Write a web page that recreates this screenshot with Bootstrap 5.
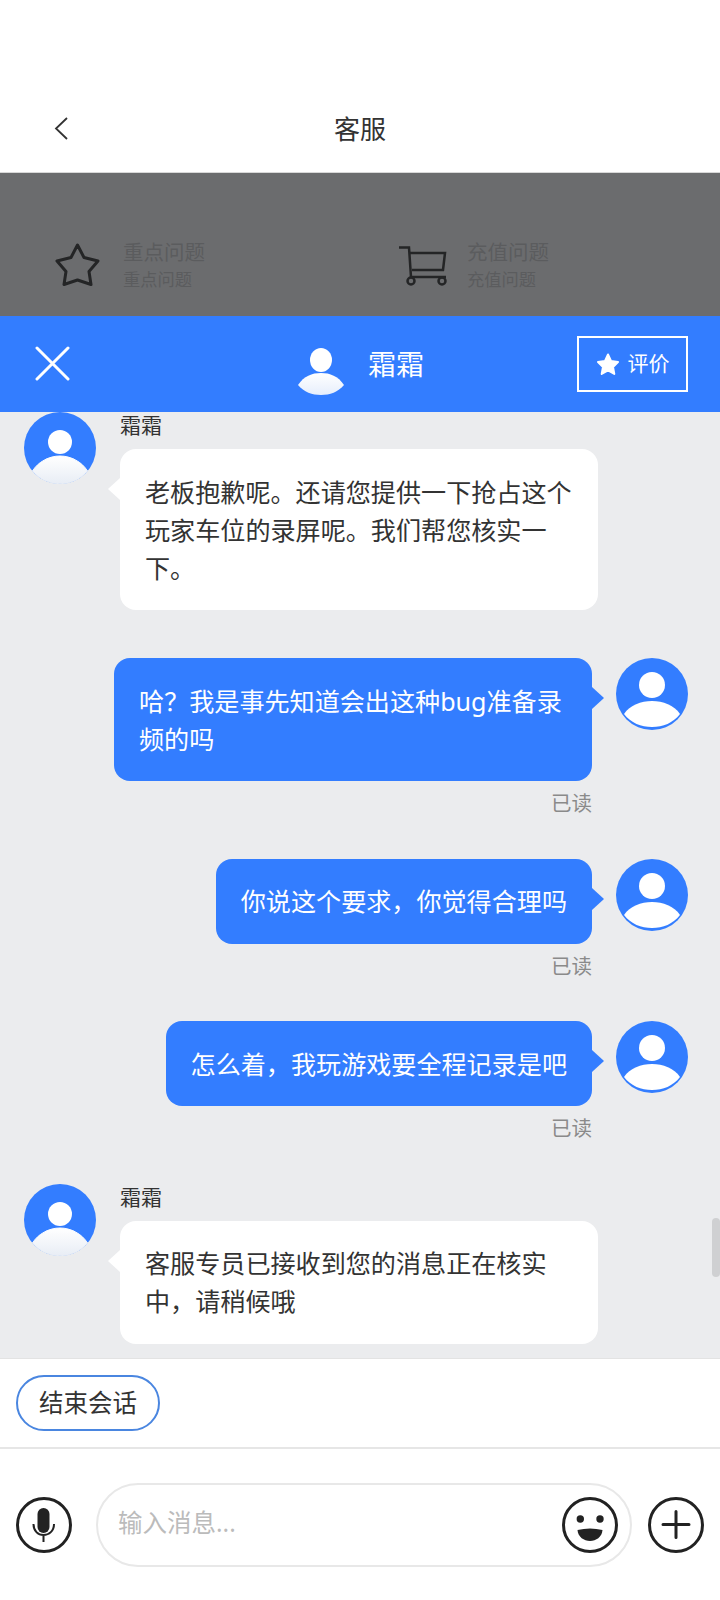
<!DOCTYPE html>
<html lang="zh">

<head>
    <meta charset="UTF-8" />
    <title>客服</title>
    <link rel="stylesheet" href="https://cdn.jsdelivr.net/npm/bootstrap@5.3.3/dist/css/bootstrap.min.css">
    <script src="https://cdn.jsdelivr.net/npm/bootstrap@5.3.3/dist/js/bootstrap.bundle.min.js"></script>
    <style>
        body {
            height: 1600px;
            overflow: hidden;
            background-color: #fff;
            font-family: "Noto Sans", "Noto Sans CJK SC", sans-serif;
            color: #333;
        }

        .top-bar {
            height: 173px;
            padding-top: 101px;
            border-bottom: 1px solid #d8d8d8;
        }

        .top-title {
            font-size: 26px;
            line-height: 56px;
            color: #333;
        }

        .back-btn {
            left: 54px;
            top: 117px;
        }

        .topic-strip {
            height: 143px;
            padding-top: 65px;
            background-color: #6b6c6e;
            color: #5b5c5e;
        }

        .topic-item {
            width: 344px;
        }

        .topic-icon {
            width: 68px;
            padding-left: 55px;
            box-sizing: content-box;
        }

        .topic-icon-star {
            margin-top: 5px;
        }

        .topic-icon-cart {
            margin-top: 8px;
        }

        .topic-name {
            font-size: 20.5px;
            line-height: 28px;
        }

        .topic-sub {
            font-size: 17.3px;
            line-height: 27px;
        }

        .agent-bar {
            height: 96px;
            background-color: #337dff;
            color: #fff;
        }

        .close-btn {
            left: 35px;
            top: 30px;
        }

        .agent-icon {
            margin-top: 15px;
            margin-left: 2px;
        }

        .agent-name {
            font-size: 28px;
            margin-left: 24px;
            margin-top: -1px;
        }

        .rate-btn {
            right: 32px;
            top: 20px;
            width: 111px;
            height: 56px;
            border: 2px solid #fff;
            font-size: 21px;
            gap: 8px;
        }

        .chat-area {
            height: 946px;
            background-color: #ebecee;
            overflow: hidden;
        }

        .scroll-thumb {
            right: 0;
            top: 806px;
            width: 8px;
            height: 59px;
            border-radius: 4px;
            background-color: #cfd0d2;
        }

        .msg-left {
            padding-left: 24px;
            margin-bottom: 48px;
        }

        .msg-right {
            padding-right: 32px;
            margin-bottom: 39.5px;
        }

        .msg-avatar {
            flex: 0 0 72px;
            width: 72px;
            height: 72px;
        }

        .msg-name {
            height: 37px;
            font-size: 21px;
            line-height: 26px;
            color: #333;
        }

        .bubble {
            position: relative;
            max-width: 478px;
            padding: 23.5px 25px;
            border-radius: 16px;
            font-size: 25.1px;
            line-height: 38px;
        }

        .bubble::before {
            content: "";
            position: absolute;
            top: 29px;
            border-top: 11px solid transparent;
            border-bottom: 11px solid transparent;
        }

        .bubble-in {
            width: 478px;
            background-color: #fff;
            color: #333;
        }

        .bubble-in::before {
            left: -12px;
            border-right: 12px solid #fff;
        }

        .bubble-out {
            background-color: #337dff;
            color: #fff;
        }

        .bubble-out::before {
            right: -12px;
            border-left: 12px solid #337dff;
        }

        .read-mark {
            height: 30px;
            margin-top: 7px;
            margin-bottom: 1px;
            font-size: 20.5px;
            line-height: 30px;
            color: #8a8a8a;
        }

        .quick-bar {
            height: 91px;
            padding: 16px 16px 0;
            border-top: 1px solid #e3e3e3;
            border-bottom: 2px solid #e6e6e6;
        }

        .end-btn {
            width: 144px;
            height: 56px;
            border: 2px solid #4a86e0;
            border-radius: 28px;
            font-size: 24.5px;
            line-height: 52px;
            color: #333;
        }

        .input-row {
            padding: 34px 16px 0;
        }

        .input-pill {
            width: 536px;
            height: 84px;
            margin-left: 24px;
            margin-right: 16px;
            padding: 0 12px 0 20px;
            border: 2px solid #e8e8e8;
            border-radius: 42px;
            font-size: 24.5px;
            color: #bbb;
        }

        .input-hint {
            margin-top: -4px;
        }
    </style>
</head>

<body>

    <svg width="0" height="0" class="position-absolute">
        <defs>
            <linearGradient id="fadeBody" x1="0" y1="0" x2="0" y2="1">
                <stop offset="0" stop-color="#fff" />
                <stop offset="1" stop-color="#e6eefc" />
            </linearGradient>
            <linearGradient id="fadeChat" x1="0" y1="0" x2="0" y2="1">
                <stop offset="0" stop-color="#fff" />
                <stop offset="1" stop-color="#e8edf5" />
            </linearGradient>
        </defs>
    </svg>

    <!-- Header -->
    <div class="top-bar position-relative text-center">
        <svg class="back-btn position-absolute" width="14" height="23" viewBox="0 0 14 23" fill="none" stroke="#333" stroke-width="1.800">
            <path d="M13 1 2 11.500 13 22" />
        </svg>
        <div class="top-title">客服</div>
    </div>

    <!-- Topics behind the overlay -->
    <div class="topic-strip d-flex">
        <div class="topic-item d-flex">
            <div class="topic-icon topic-icon-star">
                <svg width="46" height="44" viewBox="0 0 46 44" fill="none" stroke="#242526" stroke-width="3" stroke-linejoin="round">
                    <path d="M22.500 2 29 14.500 43 18 34 28.500 36 41.500 22.500 37 9 41.500 11 28.500 2 18 16 14.500Z" />
                </svg>
            </div>
            <div>
                <div class="topic-name">重点问题</div>
                <div class="topic-sub">重点问题</div>
            </div>
        </div>
        <div class="topic-item d-flex">
            <div class="topic-icon topic-icon-cart">
                <svg width="50" height="40" viewBox="0 0 50 40" fill="none" stroke="#242526" stroke-width="2.500">
                    <path d="M0 1.500H10L12 31H47" />
                    <path d="M11 7H46L44 24H13" />
                    <circle cx="12" cy="35" r="3.500" />
                    <circle cx="43" cy="35" r="3.500" />
                </svg>
            </div>
            <div>
                <div class="topic-name">充值问题</div>
                <div class="topic-sub">充值问题</div>
            </div>
        </div>
    </div>

    <!-- Agent bar -->
    <div class="agent-bar position-relative d-flex align-items-center justify-content-center">
        <svg class="close-btn position-absolute" width="35" height="35" viewBox="0 0 35 35" stroke="#fff" stroke-width="3" stroke-linecap="round">
            <path d="M2 2 33 33M33 2 2 33" />
        </svg>
        <svg class="agent-icon" width="46" height="47" viewBox="0 0 46 47">
            <ellipse cx="23" cy="12" rx="11" ry="12" fill="#fff" />
            <path d="M0 37C6 28 14 25 23 25S40 28 46 37C40 44 32 47 23 47S6 44 0 37Z" fill="url(#fadeBody)" />
        </svg>
        <span class="agent-name">霜霜</span>
        <div class="rate-btn position-absolute d-flex align-items-center justify-content-center">
            <svg width="24" height="24" viewBox="0 0 24 24" fill="#fff" stroke="#fff" stroke-width="2" stroke-linejoin="round">
                <path d="M12 2.500 15 9 22 10 17 15 18.300 22 12 18.500 5.700 22 7 15 2 10 9 9Z" />
            </svg>
            <span>评价</span>
        </div>
    </div>

    <!-- Chat -->
    <div class="chat-area position-relative">
        <div class="scroll-thumb position-absolute"></div>

        <div class="msg-left d-flex">
            <svg class="msg-avatar" viewBox="0 0 72 72">
                <circle cx="36" cy="36" r="36" fill="#337dff" />
                <circle cx="36" cy="30" r="12" fill="#fff" />
                <path d="M8.500 59C14 50 25 44 36 44S58 50 63.500 59A36 36 0 0 1 8.500 59Z" fill="url(#fadeChat)" stroke="url(#fadeChat)" />
            </svg>
            <div class="ms-4">
                <div class="msg-name">霜霜</div>
                <div class="bubble bubble-in">老板抱歉呢。还请您提供一下抢占这个玩家车位的录屏呢。我们帮您核实一下。</div>
            </div>
        </div>

        <div class="msg-right d-flex justify-content-end">
            <div class="d-flex flex-column align-items-end me-4">
                <div class="bubble bubble-out">哈？我是事先知道会出这种bug准备录频的吗</div>
                <div class="read-mark">已读</div>
            </div>
            <svg class="msg-avatar" viewBox="0 0 72 72">
                <circle cx="36" cy="36" r="36" fill="#337dff" />
                <circle cx="36" cy="27" r="13" fill="#fff" />
                <path d="M8 56C14 47 25 43 36 43S58 47 64 56C57 65 47 69 36 69S15 65 8 56Z" fill="#fff" />
            </svg>
        </div>

        <div class="msg-right d-flex justify-content-end">
            <div class="d-flex flex-column align-items-end me-4">
                <div class="bubble bubble-out">你说这个要求，你觉得合理吗</div>
                <div class="read-mark">已读</div>
            </div>
            <svg class="msg-avatar" viewBox="0 0 72 72">
                <circle cx="36" cy="36" r="36" fill="#337dff" />
                <circle cx="36" cy="27" r="13" fill="#fff" />
                <path d="M8 56C14 47 25 43 36 43S58 47 64 56C57 65 47 69 36 69S15 65 8 56Z" fill="#fff" />
            </svg>
        </div>

        <div class="msg-right d-flex justify-content-end">
            <div class="d-flex flex-column align-items-end me-4">
                <div class="bubble bubble-out">怎么着，我玩游戏要全程记录是吧</div>
                <div class="read-mark">已读</div>
            </div>
            <svg class="msg-avatar" viewBox="0 0 72 72">
                <circle cx="36" cy="36" r="36" fill="#337dff" />
                <circle cx="36" cy="27" r="13" fill="#fff" />
                <path d="M8 56C14 47 25 43 36 43S58 47 64 56C57 65 47 69 36 69S15 65 8 56Z" fill="#fff" />
            </svg>
        </div>

        <div class="msg-left d-flex">
            <svg class="msg-avatar" viewBox="0 0 72 72">
                <circle cx="36" cy="36" r="36" fill="#337dff" />
                <circle cx="36" cy="30" r="12" fill="#fff" />
                <path d="M8.500 59C14 50 25 44 36 44S58 50 63.500 59A36 36 0 0 1 8.500 59Z" fill="url(#fadeChat)" stroke="url(#fadeChat)" />
            </svg>
            <div class="ms-4">
                <div class="msg-name">霜霜</div>
                <div class="bubble bubble-in">客服专员已接收到您的消息正在核实中，请稍候哦</div>
            </div>
        </div>
    </div>

    <!-- Quick reply -->
    <div class="quick-bar">
        <div class="end-btn text-center">结束会话</div>
    </div>

    <!-- Input -->
    <div class="input-row d-flex align-items-center">
        <svg width="56" height="56" viewBox="0 0 56 56" fill="none" stroke="#222" stroke-width="3">
            <circle cx="28" cy="28" r="26.500" />
            <rect x="21.500" y="11" width="12" height="25" rx="6" fill="#222" stroke="none" />
            <path d="M17.500 27C17.500 34 22 38 27.500 38S38 34 38 27M27.500 38V45" stroke-width="2" />
        </svg>
        <div class="input-pill d-flex align-items-center justify-content-between">
            <span class="input-hint">输入消息...</span>
            <svg width="56" height="56" viewBox="0 0 56 56" fill="none" stroke="#222" stroke-width="3">
                <circle cx="28" cy="28" r="26.500" />
                <circle cx="18.300" cy="22" r="3.700" fill="#222" stroke="none" />
                <circle cx="38" cy="22" r="3.700" fill="#222" stroke="none" />
                <path d="M15.500 33Q28 30 40.500 33C40 40 34 44 28 44S16 40 15.500 33Z" fill="#222" stroke="none" />
            </svg>
        </div>
        <svg width="56" height="56" viewBox="0 0 56 56" fill="none" stroke="#222" stroke-width="3">
            <circle cx="28" cy="28" r="26.500" />
            <path d="M15 27.500H41M28 14.500V40.500" stroke-linecap="round" />
        </svg>
    </div>

</body>

</html>
